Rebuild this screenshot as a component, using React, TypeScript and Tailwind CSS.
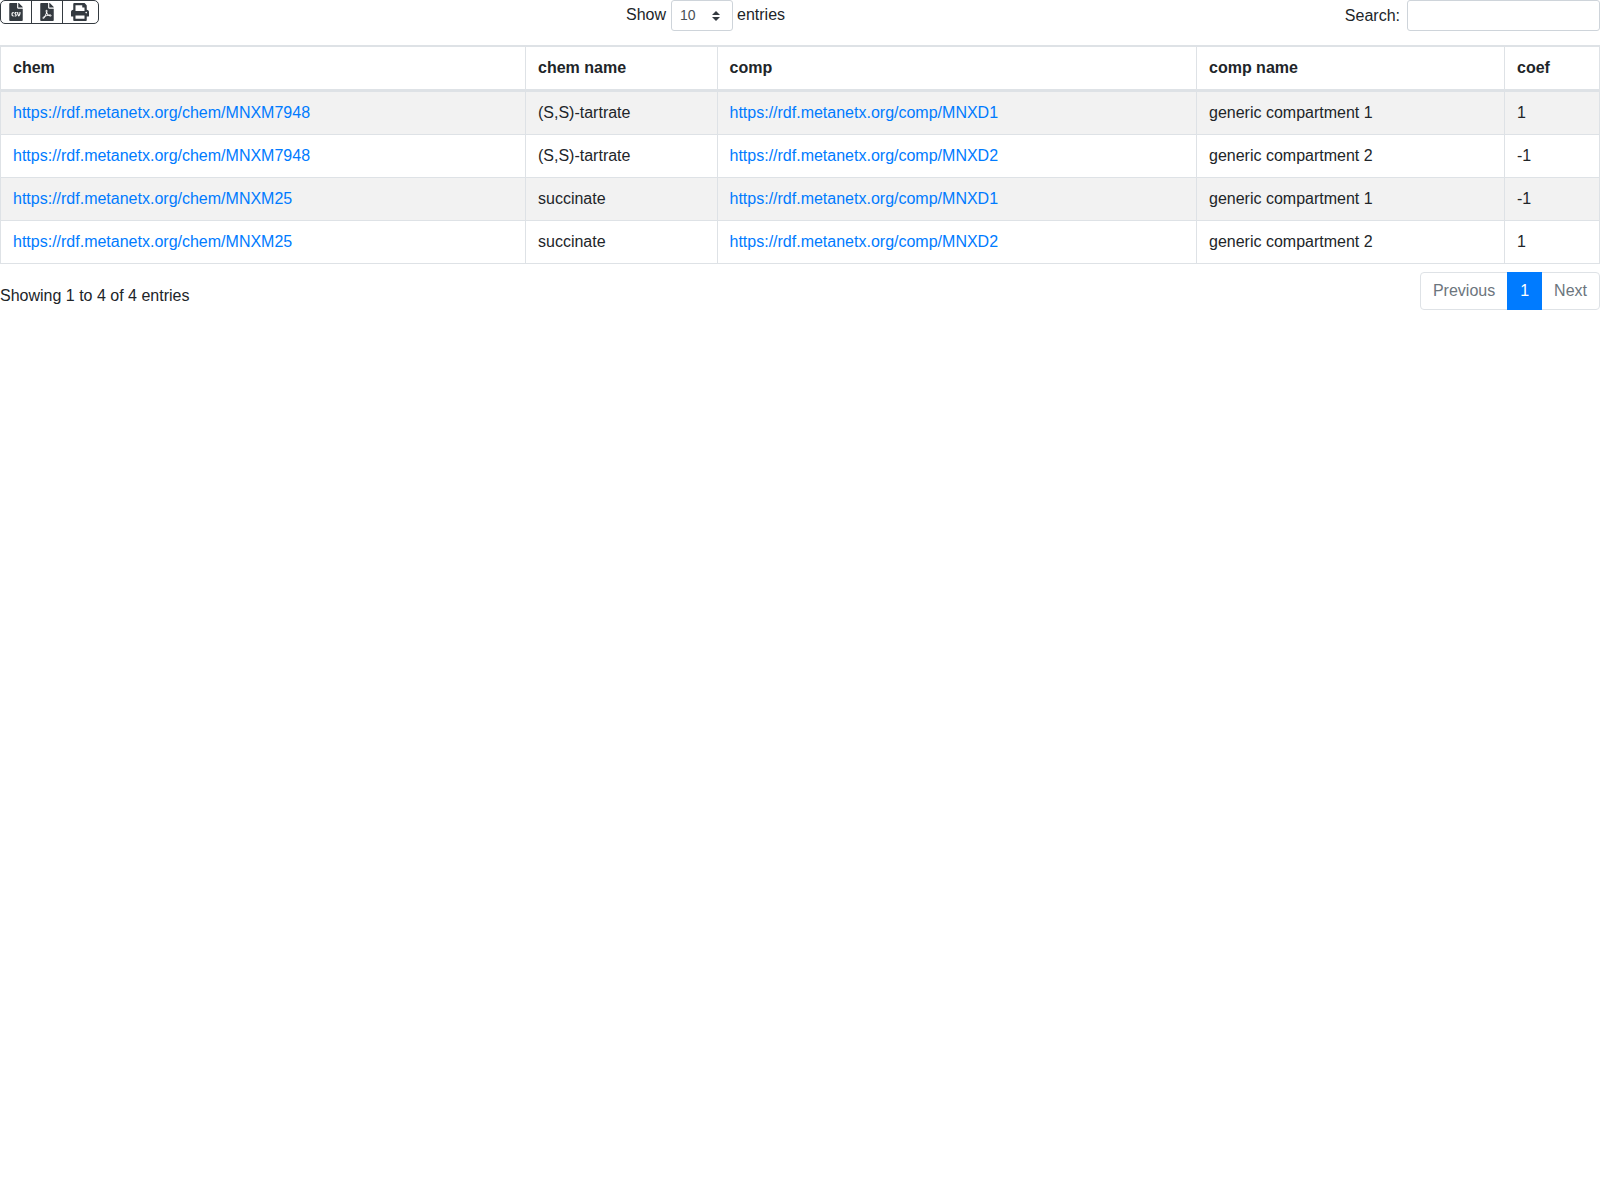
import { FaFileCsv, FaFilePdf, FaPrint } from "react-icons/fa";

const rows = [
  { chem: "MNXM7948", name: "(S,S)-tartrate", comp: "MNXD1", compName: "generic compartment 1", coef: "1" },
  { chem: "MNXM7948", name: "(S,S)-tartrate", comp: "MNXD2", compName: "generic compartment 2", coef: "-1" },
  { chem: "MNXM25", name: "succinate", comp: "MNXD1", compName: "generic compartment 1", coef: "-1" },
  { chem: "MNXM25", name: "succinate", comp: "MNXD2", compName: "generic compartment 2", coef: "1" },
];

const headers = ["chem", "chem name", "comp", "comp name", "coef"];

export default function App() {
  return (
    <div className="min-h-[1200px] text-[16px] leading-6 text-[#212529] antialiased font-['Liberation_Sans',Arial,sans-serif]">
      <div className="flex h-[45px] items-start">
        <div className="flex h-6 w-[99px] overflow-hidden rounded-[5px] border border-[#343a40]">
          <button className="flex w-[31px] items-center justify-center border-r border-[#343a40]">
            <FaFileCsv className="h-[18px] w-[14px] text-[#343a40]" />
          </button>
          <button className="flex w-[31px] items-center justify-center border-r border-[#343a40]">
            <FaFilePdf className="h-[18px] w-[14px] text-[#343a40]" />
          </button>
          <button className="flex flex-1 items-center justify-center pr-[2px]">
            <FaPrint className="h-[18px] w-[18px] text-[#343a40]" />
          </button>
        </div>
        <div className="ml-[527px] flex items-start">
          <span className="mt-[3px]">Show</span>
          <div className="relative ml-[5px] mr-[4px] h-[31px] w-[62px] rounded-[3px] border border-[#ced4da] pl-2 text-[14px] leading-[29px] text-[#495057]">
            10
            <svg className="absolute right-[12px] top-[10px]" width="8" height="10" viewBox="0 0 8 10">
              <path d="M4 0 L8 4 H0 Z M0 6 H8 L4 10 Z" fill="#343a40" />
            </svg>
          </div>
          <span className="mt-[3px]">entries</span>
        </div>
        <div className="ml-auto flex items-center">
          <span className="mr-[7px]">Search:</span>
          <input className="h-[31px] w-[193px] rounded-[3px] border border-[#ced4da] bg-white" />
        </div>
      </div>
      <table className="w-[1600px] table-fixed border-separate border-spacing-0">
        <colgroup>
          <col className="w-[526px]" />
          <col className="w-[191.5px]" />
          <col className="w-[479.5px]" />
          <col className="w-[308px]" />
          <col className="w-[95px]" />
        </colgroup>
        <thead>
          <tr>
            {headers.map((h) => (
              <th
                key={h}
                className="h-[47px] border-t-2 border-r border-b-[3px] border-[#dee2e6] px-3 text-left font-bold first:border-l"
              >
                {h}
              </th>
            ))}
          </tr>
        </thead>
        <tbody>
          {rows.map((r, i) => (
            <tr key={i} className={i % 2 === 0 ? "bg-[#f2f2f2]" : "bg-white"}>
              <td className="h-[43px] border-r border-b border-l border-[#dee2e6] px-3">
                <a href="#" className="text-[#007bff]">https://rdf.metanetx.org/chem/{r.chem}</a>
              </td>
              <td className="border-r border-b border-[#dee2e6] px-3">{r.name}</td>
              <td className="border-r border-b border-[#dee2e6] px-3">
                <a href="#" className="text-[#007bff]">https://rdf.metanetx.org/comp/{r.comp}</a>
              </td>
              <td className="border-r border-b border-[#dee2e6] px-3">{r.compName}</td>
              <td className="border-r border-b border-[#dee2e6] px-3">{r.coef}</td>
            </tr>
          ))}
        </tbody>
      </table>
      <div className="mt-2 flex items-start justify-between">
        <div className="pt-3">Showing 1 to 4 of 4 entries</div>
        <div className="flex h-[38px]">
          <span className="flex items-center rounded-l-[4px] border border-[#dee2e6] px-3 text-[#6c757d]">Previous</span>
          <span className="relative z-10 -ml-px flex items-center border border-[#007bff] bg-[#007bff] px-3 text-white">1</span>
          <span className="-ml-px flex items-center rounded-r-[4px] border border-[#dee2e6] px-3 text-[#6c757d]">Next</span>
        </div>
      </div>
    </div>
  );
}
